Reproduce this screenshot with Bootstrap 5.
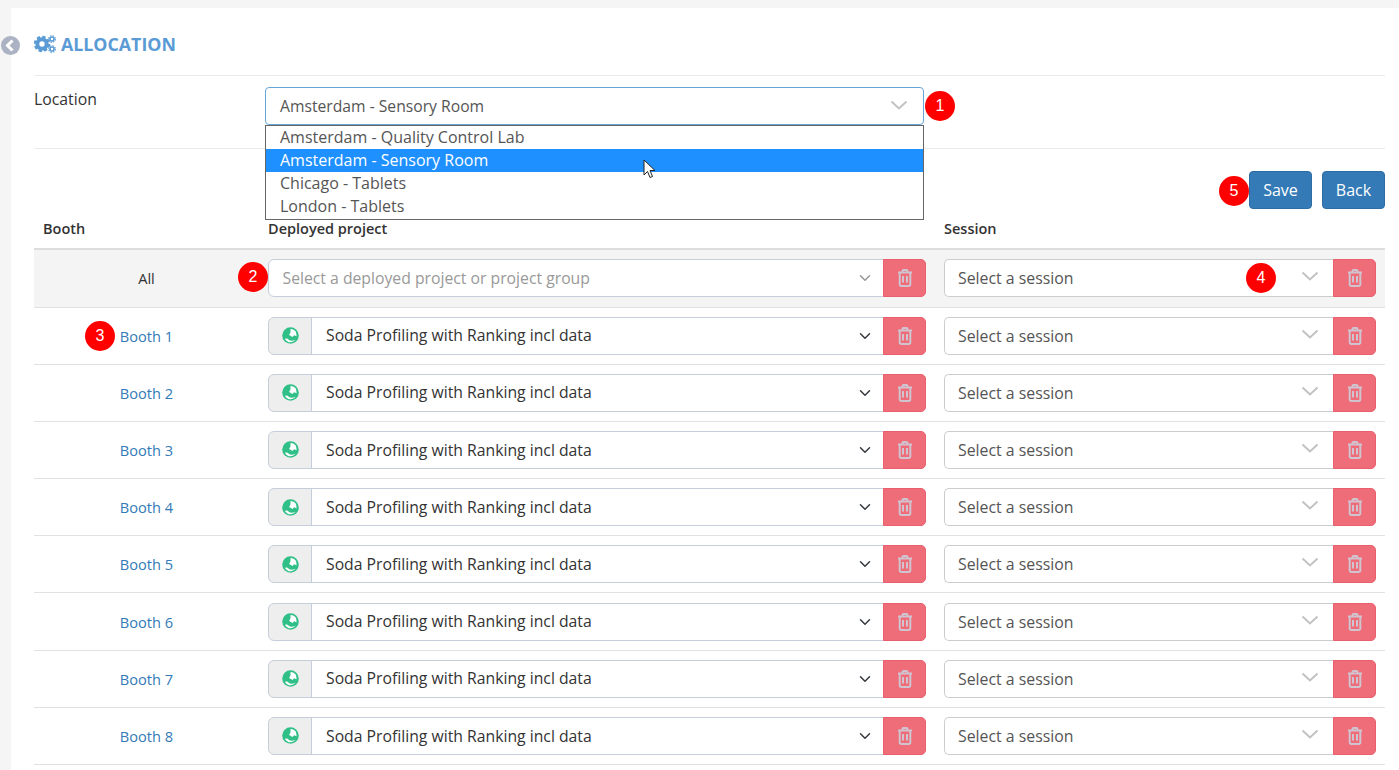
<!DOCTYPE html>
<html lang="en">
<head>
<meta charset="utf-8">
<title>Allocation</title>
<link href="https://cdn.jsdelivr.net/npm/bootstrap@5.3.0/dist/css/bootstrap.min.css" rel="stylesheet">
<style>
html,body{height:100%;overflow:hidden}
body{background:#f5f5f5;font-family:"Open Sans",sans-serif;font-size:15px;color:#333;padding:8px 0 0 11px}
.sheet{background:#fff;height:762px;padding:0 14px 0 23px;position:relative}
.backdot{position:absolute;left:-10px;top:28px;width:19px;height:19px}
.headline{height:68px;border-bottom:1px solid #e9eaec;padding-top:24px}
.headline h1{font-size:17.800px;font-weight:700;color:#5b9bd5;margin:0;line-height:24px;display:flex;align-items:center;gap:5px}
.locrow{height:73px;border-bottom:1px solid #e9eaec;position:relative;padding-top:11px}
.loclabel{width:231px;font-size:15.800px;line-height:24px}
.locbox{width:659px;height:38px;border:1px solid #66a5d8;border-radius:4px;padding:0 14px;line-height:36px;font-size:15.700px;color:#555;position:relative}
.droplist{position:absolute;left:231px;top:49px;width:659px;border:1px solid #666;background:#fff;z-index:5;margin:0;padding:0;list-style:none;font-size:16px;color:#555}
.droplist li{height:23px;line-height:22px;padding-left:14px}
.droplist li:last-child{height:24px}
.droplist .picked{background:#1e90ff;color:#fff}
.chev{position:absolute;right:15px;top:12px;width:18px;height:11px}
.actions{height:61px;padding-top:22px;gap:10px}
.actions .btn{background:#337ab7;border:1px solid #2e6da4;color:#fff;width:63px;height:38px;font-size:16px;padding:0;border-radius:4px}
.colhead{display:flex;height:40px;border-bottom:2px solid #ddd;font-size:14.500px;font-weight:600;padding-top:9px;line-height:20px}
.colhead>div:nth-child(1){width:234px;padding-left:9px}
.colhead>div:nth-child(2){width:676px}
.tr{display:flex;align-items:center;height:57.200px;border-bottom:1px solid #dfe1e4;position:relative}
.tr.allrow{background:#f4f4f4;height:57.500px}
.boothcell{width:225px;text-align:center;font-size:14.600px;color:#337ab7;flex:none;padding-top:2px}
.allrow .boothcell{color:#333}
.projcell{width:658px;margin-left:9px;margin-right:18px;flex:none}
.sesscell{width:432px;flex:none}
.input-group .form-select,.input-group .input-group-text,.input-group .btn{height:38px}
.prj{font-size:15.750px;color:#333;border-color:#c5cedb;background-position:right 10px center;font-family:inherit;padding:1px 32px 0 14px}
.prj.empty{color:#999;padding-left:13.500px;background-image:url("data:image/svg+xml,%3csvg xmlns='http://www.w3.org/2000/svg' viewBox='0 0 16 16'%3e%3cpath fill='none' stroke='%23999' stroke-linecap='round' stroke-linejoin='round' stroke-width='2' d='m2 5 6 6 6-6'/%3e%3c/svg%3e")}
.ses{font-size:15.850px;color:#555;border:1.500px solid #ccc;border-right:0;height:38px;line-height:36px;padding:0 13px;flex:1;background:#fff;border-radius:5px 0 0 5px;position:relative}
.ses .chev{right:15px;top:11px;width:18px}
.globecell{width:44px;padding:0;justify-content:center;background:#eee;border-color:#c5cedb}
.trashbtn{width:43px;padding:0;background:#ee6d79;border:1px solid #e95f6c;border-radius:0 5px 5px 0;display:flex;align-items:center;justify-content:center}
.num{position:absolute;width:30px;height:30px;background:#f00;border-radius:50%;color:#fff;font-family:"Liberation Sans",sans-serif;font-size:16px;line-height:29px;text-align:center;z-index:6}
.arrowptr{position:absolute;left:609px;top:83px;width:14px;height:21px;z-index:7}
</style>
</head>
<body>
<svg width="0" height="0" class="position-absolute">
<defs>
<symbol id="bin" viewBox="0 0 16 18"><path d="M1 3.500h14M5.500 3.500V2a1 1 0 0 1 1-1h3a1 1 0 0 1 1 1v1.500M2.700 3.500V15.500a1.500 1.500 0 0 0 1.500 1.500h7.600a1.500 1.500 0 0 0 1.500-1.500V3.500M6 7v6.500M10 7v6.500" fill="none" stroke="#cfc4cf" stroke-width="2"/></symbol>
<symbol id="chevy" viewBox="0 0 18 11"><path d="M1.500 1.500 9 8.500l7.500-7" fill="none" stroke="#c2c2c2" stroke-width="2"/></symbol>
<symbol id="globe" viewBox="0 0 16 16"><circle cx="8" cy="8" r="7.800" fill="#2fbf87"/><path d="M8 1.800c2.200 0 4 1 5.200 2.800l.6 4.200-2.500-1-1.300 1.700-3.300-2L8 5zM2.800 11.200c1.500-.8 2.600-.2 3.600.8s3.300 1.300 6.500.1C11.500 13.700 9.800 14.400 8 14.400c-2 0-3.900-1.200-5.200-3.200z" fill="#fff"/></symbol>
</defs>
</svg>
<main class="sheet">
<svg class="backdot" viewBox="0 0 19 19"><circle cx="9.500" cy="9.500" r="9.500" fill="#aab2c3"/><path d="M11.500 4.500 6.500 9.500l5 5" fill="none" stroke="#fff" stroke-width="3"/></svg>
<header class="headline">
<h1><svg width="22" height="18" viewBox="0 0 22 18"><circle cx="8" cy="9" r="4.700" fill="none" stroke="#5b9bd5" stroke-width="4"/><circle cx="8" cy="9" r="6.800" fill="none" stroke="#5b9bd5" stroke-width="2.800" stroke-dasharray="3.200 2.150"/><g fill="none" stroke="#5b9bd5"><circle cx="18" cy="4" r="2" stroke-width="1.600"/><circle cx="18" cy="4" r="3.300" stroke-width="1.200" stroke-dasharray="1.500 1.100"/><circle cx="18" cy="14" r="2" stroke-width="1.600"/><circle cx="18" cy="14" r="3.300" stroke-width="1.200" stroke-dasharray="1.500 1.100"/></g></svg>ALLOCATION</h1>
</header>
<section class="locrow d-flex">
<div class="loclabel">Location</div>
<div class="locbox">Amsterdam - Sensory Room<svg class="chev"><use href="#chevy"/></svg></div>
<ul class="droplist">
<li>Amsterdam - Quality Control Lab</li>
<li class="picked">Amsterdam - Sensory Room</li>
<li>Chicago - Tablets</li>
<li>London - Tablets</li>
</ul>
<span class="num" style="left:891px;top:15px">1</span>
<svg class="arrowptr" viewBox="0 0 14 21"><path d="M1 1v15l3.500-3.500 2.500 6 2.500-1-2.500-6h5z" fill="#fff" stroke="#222" stroke-width="1"/></svg>
</section>
<div class="actions d-flex justify-content-end position-relative">
<span class="num" style="right:136px;top:27px">5</span>
<button class="btn" type="button">Save</button>
<button class="btn" type="button">Back</button>
</div>
<div class="colhead"><div>Booth</div><div>Deployed project</div><div>Session</div></div>
<div id="rows">
<div class="tr allrow">
<div class="boothcell">All</div>
<div class="projcell input-group"><select class="form-select prj empty"><option>Select a deployed project or project group</option></select><button class="btn trashbtn" type="button"><svg width="16" height="18"><use href="#bin"/></svg></button></div>
<div class="sesscell input-group"><div class="ses">Select a session<svg class="chev"><use href="#chevy"/></svg></div><button class="btn trashbtn" type="button"><svg width="16" height="18"><use href="#bin"/></svg></button></div>
<span class="num" style="left:204px;top:12px">2</span>
<span class="num" style="left:1212px;top:13px">4</span>
</div>
<div class="tr">
<div class="boothcell">Booth 1</div>
<div class="projcell input-group"><span class="input-group-text globecell"><svg width="17" height="17"><use href="#globe"/></svg></span><select class="form-select prj"><option>Soda Profiling with Ranking incl data</option></select><button class="btn trashbtn" type="button"><svg width="16" height="18"><use href="#bin"/></svg></button></div>
<div class="sesscell input-group"><div class="ses">Select a session<svg class="chev"><use href="#chevy"/></svg></div><button class="btn trashbtn" type="button"><svg width="16" height="18"><use href="#bin"/></svg></button></div>
<span class="num" style="left:51px;top:13px">3</span>
</div>
<div class="tr">
<div class="boothcell">Booth 2</div>
<div class="projcell input-group"><span class="input-group-text globecell"><svg width="17" height="17"><use href="#globe"/></svg></span><select class="form-select prj"><option>Soda Profiling with Ranking incl data</option></select><button class="btn trashbtn" type="button"><svg width="16" height="18"><use href="#bin"/></svg></button></div>
<div class="sesscell input-group"><div class="ses">Select a session<svg class="chev"><use href="#chevy"/></svg></div><button class="btn trashbtn" type="button"><svg width="16" height="18"><use href="#bin"/></svg></button></div>
</div>
<div class="tr">
<div class="boothcell">Booth 3</div>
<div class="projcell input-group"><span class="input-group-text globecell"><svg width="17" height="17"><use href="#globe"/></svg></span><select class="form-select prj"><option>Soda Profiling with Ranking incl data</option></select><button class="btn trashbtn" type="button"><svg width="16" height="18"><use href="#bin"/></svg></button></div>
<div class="sesscell input-group"><div class="ses">Select a session<svg class="chev"><use href="#chevy"/></svg></div><button class="btn trashbtn" type="button"><svg width="16" height="18"><use href="#bin"/></svg></button></div>
</div>
<div class="tr">
<div class="boothcell">Booth 4</div>
<div class="projcell input-group"><span class="input-group-text globecell"><svg width="17" height="17"><use href="#globe"/></svg></span><select class="form-select prj"><option>Soda Profiling with Ranking incl data</option></select><button class="btn trashbtn" type="button"><svg width="16" height="18"><use href="#bin"/></svg></button></div>
<div class="sesscell input-group"><div class="ses">Select a session<svg class="chev"><use href="#chevy"/></svg></div><button class="btn trashbtn" type="button"><svg width="16" height="18"><use href="#bin"/></svg></button></div>
</div>
<div class="tr">
<div class="boothcell">Booth 5</div>
<div class="projcell input-group"><span class="input-group-text globecell"><svg width="17" height="17"><use href="#globe"/></svg></span><select class="form-select prj"><option>Soda Profiling with Ranking incl data</option></select><button class="btn trashbtn" type="button"><svg width="16" height="18"><use href="#bin"/></svg></button></div>
<div class="sesscell input-group"><div class="ses">Select a session<svg class="chev"><use href="#chevy"/></svg></div><button class="btn trashbtn" type="button"><svg width="16" height="18"><use href="#bin"/></svg></button></div>
</div>
<div class="tr">
<div class="boothcell">Booth 6</div>
<div class="projcell input-group"><span class="input-group-text globecell"><svg width="17" height="17"><use href="#globe"/></svg></span><select class="form-select prj"><option>Soda Profiling with Ranking incl data</option></select><button class="btn trashbtn" type="button"><svg width="16" height="18"><use href="#bin"/></svg></button></div>
<div class="sesscell input-group"><div class="ses">Select a session<svg class="chev"><use href="#chevy"/></svg></div><button class="btn trashbtn" type="button"><svg width="16" height="18"><use href="#bin"/></svg></button></div>
</div>
<div class="tr">
<div class="boothcell">Booth 7</div>
<div class="projcell input-group"><span class="input-group-text globecell"><svg width="17" height="17"><use href="#globe"/></svg></span><select class="form-select prj"><option>Soda Profiling with Ranking incl data</option></select><button class="btn trashbtn" type="button"><svg width="16" height="18"><use href="#bin"/></svg></button></div>
<div class="sesscell input-group"><div class="ses">Select a session<svg class="chev"><use href="#chevy"/></svg></div><button class="btn trashbtn" type="button"><svg width="16" height="18"><use href="#bin"/></svg></button></div>
</div>
<div class="tr">
<div class="boothcell">Booth 8</div>
<div class="projcell input-group"><span class="input-group-text globecell"><svg width="17" height="17"><use href="#globe"/></svg></span><select class="form-select prj"><option>Soda Profiling with Ranking incl data</option></select><button class="btn trashbtn" type="button"><svg width="16" height="18"><use href="#bin"/></svg></button></div>
<div class="sesscell input-group"><div class="ses">Select a session<svg class="chev"><use href="#chevy"/></svg></div><button class="btn trashbtn" type="button"><svg width="16" height="18"><use href="#bin"/></svg></button></div>
</div>
</div>
</main>
<script src="https://cdn.jsdelivr.net/npm/bootstrap@5.3.0/dist/js/bootstrap.bundle.min.js"></script>
</body>
</html>
